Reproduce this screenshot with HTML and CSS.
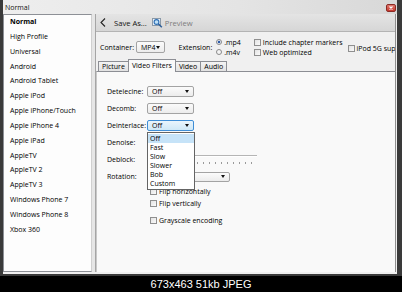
FILE: index.html
```html
<!DOCTYPE html>
<html>
<head>
<meta charset="utf-8">
<title>Normal</title>
<link rel="stylesheet" href="styles.css">
</head>
<body>
<div class="window">
  <div class="titlebar">
    <span class="title">Normal</span>
    <span class="close"><svg width="10" height="8" viewBox="0 0 10 8"><path d="M3.5 2.5l3 3M6.5 2.5l-3 3" stroke="#fff" stroke-width="1.2" fill="none"/></svg></span>
  </div>
  <div class="main">
    <ul class="presets">
      <li class="sel">Normal</li>
      <li>High Profile</li>
      <li>Universal</li>
      <li>Android</li>
      <li>Android Tablet</li>
      <li>Apple iPod</li>
      <li>Apple iPhone/Touch</li>
      <li>Apple iPhone 4</li>
      <li>Apple iPad</li>
      <li>AppleTV</li>
      <li>AppleTV 2</li>
      <li>AppleTV 3</li>
      <li>Windows Phone 7</li>
      <li>Windows Phone 8</li>
      <li>Xbox 360</li>
    </ul>
    <div class="splitter"></div>
    <div class="content">
      <div class="toolbar">
        <svg class="back" width="6" height="9" viewBox="0 0 6 9"><path d="M5 0.5L1 4.5L5 8.5" stroke="#222" stroke-width="1.1" fill="none"/></svg>
        <span class="tb-btn">Save As...</span>
        <svg class="prev-icon" width="11" height="10" viewBox="0 0 11 10"><rect x="0.5" y="0.5" width="8" height="7" fill="#eef3f8" stroke="#8a99a8"/><circle cx="4.5" cy="4" r="2.4" fill="#bfe0f6" stroke="#2f6fb5" stroke-width="1.1"/><path d="M6.3 5.8L9.8 9.3" stroke="#2f5f98" stroke-width="1.6"/></svg>
        <span class="tb-btn disabled">Preview</span>
      </div>
      <div class="options">
        <div class="opt-row">
          <span class="lbl">Container:</span>
          <div class="select container-sel"><span>MP4</span><i class="arrow"></i></div>
          <span class="lbl ext">Extension:</span>
          <div class="stack radios">
            <span class="radio"><span class="dot on"></span>.mp4</span>
            <span class="radio"><span class="dot"></span>.m4v</span>
          </div>
          <div class="stack checks">
            <span class="check"><span class="box"></span>Include chapter markers</span>
            <span class="check"><span class="box"></span>Web optimized</span>
          </div>
          <span class="check ipod"><span class="box"></span>iPod 5G supp</span>
        </div>
        <div class="tabs">
          <span class="tab">Picture</span>
          <span class="tab active">Video Filters</span>
          <span class="tab">Video</span>
          <span class="tab">Audio</span>
        </div>
      </div>
      <div class="panel">
        <div class="filters">
          <span class="flbl">Detelecine:</span>
          <div class="select fsel"><span>Off</span><i class="arrow"></i></div>
          <span class="flbl">Decomb:</span>
          <div class="select fsel"><span>Off</span><i class="arrow"></i></div>
          <span class="flbl">Deinterlace:</span>
          <div class="select fsel focus"><span>Off</span><i class="arrow"></i></div>
          <span class="flbl">Denoise:</span>
          <div class="select fsel"><span></span><i class="arrow"></i></div>
          <span class="flbl">Deblock:</span>
          <div class="slider"><div class="track"></div><div class="ticks"></div></div>
          <span class="flbl">Rotation:</span>
          <div class="select rot"><span></span><i class="arrow"></i></div>
        </div>
        <div class="flips">
          <span class="check"><span class="box"></span>Flip horizontally</span>
          <span class="check"><span class="box"></span>Flip vertically</span>
          <span class="check gray"><span class="box"></span>Grayscale encoding</span>
        </div>
        <ul class="dropdown">
          <li class="hl">Off</li>
          <li>Fast</li>
          <li>Slow</li>
          <li>Slower</li>
          <li>Bob</li>
          <li>Custom</li>
        </ul>
      </div>
    </div>
  </div>
</div>
<div class="caption">673x463 51kb JPEG</div>
</body>
</html>
```

FILE: styles.css
```css
* { box-sizing: border-box; }
html, body { margin: 0; padding: 0; }
body {
  width: 402px;
  height: 292px;
  overflow: hidden;
  background: #000;
  font-family: "Open Sans", "Noto Sans", sans-serif;
  font-size: 7px;
  color: #000;
}
.window {
  height: 276px;
  display: flex;
  flex-direction: column;
  background: #ececec;
  border-left: 3px solid #3a3a3a;
  border-right: 5px solid #3a3a3a;
  border-bottom: 2px solid #3a3a3a;
}
.titlebar {
  height: 14px;
  flex: none;
  display: flex;
  align-items: center;
  justify-content: space-between;
  padding-left: 2px;
  background: linear-gradient(90deg, #eeeeee 0%, #e4e4e4 60%, #d8d8d8 100%);
}
.title { font-size: 7px; color: #111; }
.close {
  width: 10px;
  height: 8px;
  margin-right: 1px;
  margin-top: 1px;
  border-radius: 2px;
  background: linear-gradient(#e07a70, #c7372d);
  border: 1px solid #8a2a24;
  display: flex;
}
.close svg { margin: -1px; }
.main {
  flex: 1;
  display: flex;
  min-height: 0;
  padding-right: 1px;
  padding-bottom: 2px;
  background: #f0f0f0;
}
.presets {
  list-style: none;
  margin: 0;
  padding: 0;
  width: 89px;
  flex: none;
  background: #fdfdfd;
  border: 1px solid #8d9096;
  border-right-color: #d0d0d0;
}
.presets li {
  height: 14.85px;
  line-height: 14.85px;
  padding-left: 6px;
  white-space: nowrap;
}
.presets li.sel { font-weight: 700; }
.splitter {
  width: 4px;
  flex: none;
  background: #e6e6e6;
  border-right: 1px solid #a5a5a5;
}
.content {
  flex: 1;
  min-width: 0;
  display: flex;
  flex-direction: column;
  overflow: hidden;
  border-right: 1px solid #8e8e8e;
  background: #f0f0f0;
}
.toolbar {
  height: 18px;
  flex: none;
  display: flex;
  align-items: center;
  padding-left: 4px;
  font-size: 7.6px;
  background: linear-gradient(#e4e4e4, #d6d6d6);
  border-bottom: 1px solid #b4b4b4;
}
.back { margin-right: 8px; }
.tb-btn { color: #111; white-space: nowrap; }
.prev-icon { margin-left: 5px; margin-right: 2px; }
.tb-btn.disabled { color: #7d7d7d; }
.options {
  height: 39px;
  flex: none;
  display: flex;
  flex-direction: column;
  padding-top: 6px;
}
.opt-row {
  height: 18px;
  display: flex;
  align-items: center;
  padding-left: 4px;
  white-space: nowrap;
}
.lbl { margin-right: 2px; }
.lbl.ext { margin-left: 14px; margin-right: 4px; }
.select {
  height: 12px;
  display: flex;
  align-items: center;
  justify-content: space-between;
  padding: 0 4px 0 4px;
  border: 1px solid #a3a3a3;
  border-radius: 2px;
  background: linear-gradient(#fbfbfb, #ececec);
}
.arrow {
  width: 0;
  height: 0;
  border-left: 2.5px solid transparent;
  border-right: 2.5px solid transparent;
  border-top: 3px solid #111;
}
.container-sel { width: 38px; }
.stack {
  display: flex;
  flex-direction: column;
  gap: 2px;
}
.radio, .check {
  display: flex;
  align-items: center;
  height: 8px;
  white-space: nowrap;
}
.dot {
  width: 6px;
  height: 6px;
  margin-right: 2px;
  border-radius: 50%;
  border: 1px solid #8a8a8a;
  background: #f4f4f4;
}
.dot.on { background: radial-gradient(circle, #2b5aa8 0 1.4px, #e8eef6 1.6px); }
.checks { margin-left: 13px; }
.box {
  width: 7px;
  height: 7px;
  margin-right: 2px;
  border: 1px solid #8f8f8f;
  background: linear-gradient(135deg, #e3e3e3, #fafafa);
  flex: none;
}
.ipod { margin-left: 5px; margin-top: 2px; }
.tabs {
  display: flex;
  align-items: flex-end;
  height: 13px;
  margin-top: 2px;
  padding-left: 2px;
  position: relative;
  z-index: 1;
}
.tab {
  height: 10px;
  line-height: 9px;
  padding: 0 3px;
  border: 1px solid #8c8e94;
  border-bottom: none;
  background: linear-gradient(#f4f4f4, #e2e2e2);
  margin-right: -1px;
  white-space: nowrap;
}
.tab.active {
  height: 13px;
  line-height: 12px;
  margin-bottom: -1px;
  padding: 0 3px;
  background: #f9f9f9;
  position: relative;
  z-index: 2;
}
.panel {
  flex: 1;
  position: relative;
  background: #f9f9f9;
  border-top: 1px solid #8c8e94;
  border-left: 1px solid #c8c8c8;
  padding-top: 11px;
  padding-left: 10px;
}
.filters {
  display: grid;
  grid-template-columns: 40px 110px;
  grid-auto-rows: 17px;
  align-items: center;
}
.fsel { width: 47px; height: 11px; }
.fsel.focus {
  border-color: #3f8ed6;
  background: linear-gradient(#eaf5fc, #cfe8f7);
}
.rot { width: 83px; height: 10px; }
.slider { position: relative; height: 17px; width: 110px; }
.track {
  position: absolute;
  left: 0; right: 0; top: 4px;
  height: 2px;
  border-top: 1px solid #b5b5b5;
  border-bottom: 1px solid #fff;
}
.ticks {
  position: absolute;
  left: 2px; right: 0; top: 11px;
  height: 2px;
  background: repeating-linear-gradient(90deg, #9a9a9a 0 1px, transparent 1px 6px);
}
.flips {
  display: flex;
  flex-direction: column;
  padding-left: 43px;
  padding-top: 0;
}
.flips .check { height: 12px; }
.flips .check.gray { margin-top: 5px; }
.dropdown {
  position: absolute;
  left: 50px;
  top: 60px;
  width: 48px;
  margin: 0;
  padding: 1px 0;
  list-style: none;
  background: #fff;
  border: 1px solid #646464;
  z-index: 5;
}
.dropdown li {
  height: 9px;
  line-height: 9px;
  padding-left: 2px;
}
.dropdown li.hl { background: #c6e3f8; }
.caption {
  height: 16px;
  text-align: center;
  line-height: 16px;
  color: #fff;
  font-family: "Liberation Sans", Arial, sans-serif;
  font-size: 11px;
}
```
